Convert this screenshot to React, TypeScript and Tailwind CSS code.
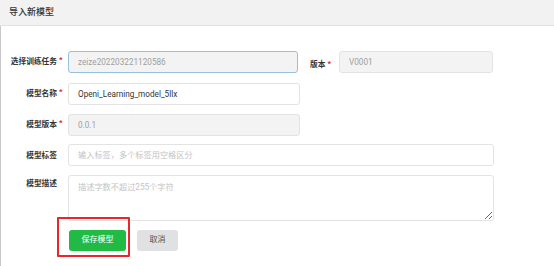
import React from 'react';

const font = { fontFamily: 'Roboto, "Noto Sans CJK SC", sans-serif' };

function Label({ text, required, className = '' }: { text: string; required?: boolean; className?: string }) {
  return (
    <div className={`w-[67px] shrink-0 flex justify-end pr-[11px] ${className}`}>
      <span className="relative text-[7.7px] font-semibold text-[#333] leading-none">
        {text}
        {required && <span className="absolute left-full top-[-2px] ml-[2px] text-[#e02020] text-[8px]">*</span>}
      </span>
    </div>
  );
}

export default function App() {
  return (
    <div className="w-[554px] h-[266px] bg-white overflow-hidden" style={font}>
      <div className="h-[26px] bg-[#f2f2f2] border-b border-[#e2e2e2] flex items-center pl-[9px]">
        <span className="text-[9px] text-[#333] font-medium">导入新模型</span>
      </div>

      <div className="h-[240px] border-l border-[#c8c8c8] pt-[24px] relative">
        <div className="flex flex-col gap-[8.8px]">
          <div className="flex items-center">
            <Label text="选择训练任务" required />
            <input
              readOnly
              value="zeize202203221120586"
              className="w-[230px] h-[22px] px-[9px] text-[8.2px] text-[#a0a0a0] bg-[#f3f3f3] border border-[#96c0df] rounded-[3px] outline-none"
            />
            <div className="ml-[12px] w-[29px] shrink-0">
              <span className="relative text-[7.7px] font-semibold text-[#333]">
                版本
                <span className="absolute left-full top-[-2px] ml-[2px] text-[#e02020] text-[8px]">*</span>
              </span>
            </div>
            <input
              readOnly
              value="V0001"
              className="w-[154px] h-[22px] px-[9px] text-[8.2px] text-[#a0a0a0] bg-[#f3f3f3] border border-[#e3e3e3] rounded-[3px] outline-none"
            />
          </div>

          <div className="flex items-center">
            <Label text="模型名称" required />
            <input
              readOnly
              value="Openi_Learning_model_5llx"
              className="w-[232px] h-[22px] px-[9px] text-[8.2px] text-[#333] bg-white border border-[#e3e3e3] rounded-[3px] outline-none"
            />
          </div>

          <div className="flex items-center">
            <Label text="模型版本" required />
            <input
              readOnly
              value="0.0.1"
              className="w-[232px] h-[22px] px-[9px] text-[8.2px] text-[#a0a0a0] bg-[#f3f3f3] border border-[#e3e3e3] rounded-[3px] outline-none"
            />
          </div>

          <div className="flex items-center">
            <Label text="模型标签" />
            <input
              placeholder="输入标签，多个标签用空格区分"
              className="w-[426px] h-[22px] px-[9px] text-[8.2px] text-[#333] placeholder:text-[#c4c4c4] bg-white border border-[#e3e3e3] rounded-[3px] outline-none"
            />
          </div>

          <div className="flex items-start">
            <Label text="模型描述" className="pt-[5px]" />
            <textarea
              placeholder="描述字数不超过255个字符"
              className="w-[426px] h-[46px] px-[9px] py-[5px] text-[8.2px] text-[#333] placeholder:text-[#c4c4c4] bg-white border border-[#e3e3e3] rounded-[3px] outline-none resize-y block"
            />
          </div>

          <div className="flex items-center pl-[68px] gap-[11px]">
            <button className="w-[57px] h-[21px] bg-[#21ba45] text-white text-[8px] rounded-[3px]">保存模型</button>
            <button className="w-[41px] h-[21px] bg-[#e0e1e2] text-[#555] text-[8px] rounded-[3px]">取消</button>
          </div>
        </div>

        <div className="absolute left-[56px] top-[191px] w-[73px] h-[40px] border-2 border-[#e8262b] rounded-[1px] pointer-events-none" />
      </div>
    </div>
  );
}
